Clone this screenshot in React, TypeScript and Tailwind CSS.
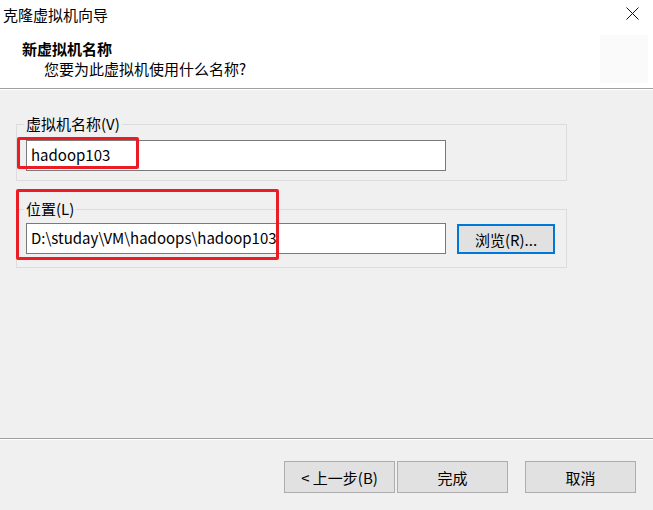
import React from "react";

const font = { fontFamily: '"Noto Sans CJK SC", "Noto Sans", sans-serif' };

function WinButton({ label, className = "" }: { label: string; className?: string }) {
  return (
    <button
      className={
        "flex h-[32px] items-center justify-center border border-[#adadad] bg-[#e1e1e1] text-[15px] leading-none text-black " +
        className
      }
    >
      {label}
    </button>
  );
}

function GroupBox({
  legend,
  className = "",
  children,
}: {
  legend: string;
  className?: string;
  children: React.ReactNode;
}) {
  return (
    <fieldset className={"m-0 border border-[#dcdcdc] px-[9px] " + className}>
      <legend className="ml-[-2px] px-[2px] text-[15px] leading-[20px] text-black">{legend}</legend>
      {children}
    </fieldset>
  );
}

export default function App() {
  return (
    <div style={font} className="relative flex h-[510px] w-[653px] flex-col overflow-hidden bg-[#f0f0f0] text-black">
      {/* title + header */}
      <div className="relative h-[88px] bg-white">
        <div className="flex h-[28px] items-center justify-between pl-[3px] pr-[14px]">
          <span className="text-[15px] leading-none">克隆虚拟机向导</span>
          <svg width="13" height="13" viewBox="0 0 13 13" className="mt-[-1px]">
            <path d="M0.5 0.5 L12.5 12.5 M12.5 0.5 L0.5 12.5" stroke="#111" strokeWidth="1" />
          </svg>
        </div>
        <div className="flex justify-between">
          <div className="pl-[22px] pt-[11px]">
            <div className="text-[15px] font-bold leading-[20px]">新虚拟机名称</div>
            <div className="pl-[22px] text-[15px] leading-[20px]">您要为此虚拟机使用什么名称?</div>
          </div>
          <div className="mr-[5px] mt-[7px] h-[48px] w-[48px] bg-[#fafafa]" />
        </div>
      </div>
      <div className="h-[1px] bg-[#a0a0a0]" />
      <div className="h-[1px] bg-white" />

      {/* body */}
      <div className="flex flex-1 flex-col pl-[16px] pr-[86px] pt-[24px]">
        <GroupBox legend="虚拟机名称(V)" className="pb-[9px]">
          <div className="mt-[6px] flex h-[31px] w-[420px] items-center border border-[#7a7a7a] bg-white pl-[4px] text-[15px]">
            hadoop103
          </div>
        </GroupBox>
        <GroupBox legend="位置(L)" className="mt-[18px] pb-[13px]">
          <div className="mt-[4px] flex items-start gap-[11px]">
            <div className="flex h-[31px] w-[420px] items-center border border-[#7a7a7a] bg-white pl-[4px] text-[15px]">
              D:\studay\VM\hadoops\hadoop103
            </div>
            <button className="mt-[1px] flex h-[30px] w-[98px] items-center justify-center border-2 border-[#0078d7] bg-[#e1e1e1] text-[15px] leading-none">
              浏览(R)...
            </button>
          </div>
        </GroupBox>
      </div>

      {/* footer */}
      <div className="h-[1px] bg-[#a0a0a0]" />
      <div className="h-[1px] bg-white" />
      <div className="flex h-[70px] items-start pl-[284px] pt-[21px]">
        <WinButton label="< 上一步(B)" className="w-[111px]" />
        <WinButton label="完成" className="ml-[2px] w-[111px]" />
        <WinButton label="取消" className="ml-[17px] w-[111px]" />
      </div>

      {/* red annotation boxes */}
      <div className="absolute left-[17px] top-[137px] h-[32px] w-[122px] rounded-[2px] border-[3px] border-[#ec1c24]" />
      <div className="absolute left-[16px] top-[189px] h-[71px] w-[263px] rounded-[2px] border-[3px] border-[#ec1c24]" />
    </div>
  );
}
